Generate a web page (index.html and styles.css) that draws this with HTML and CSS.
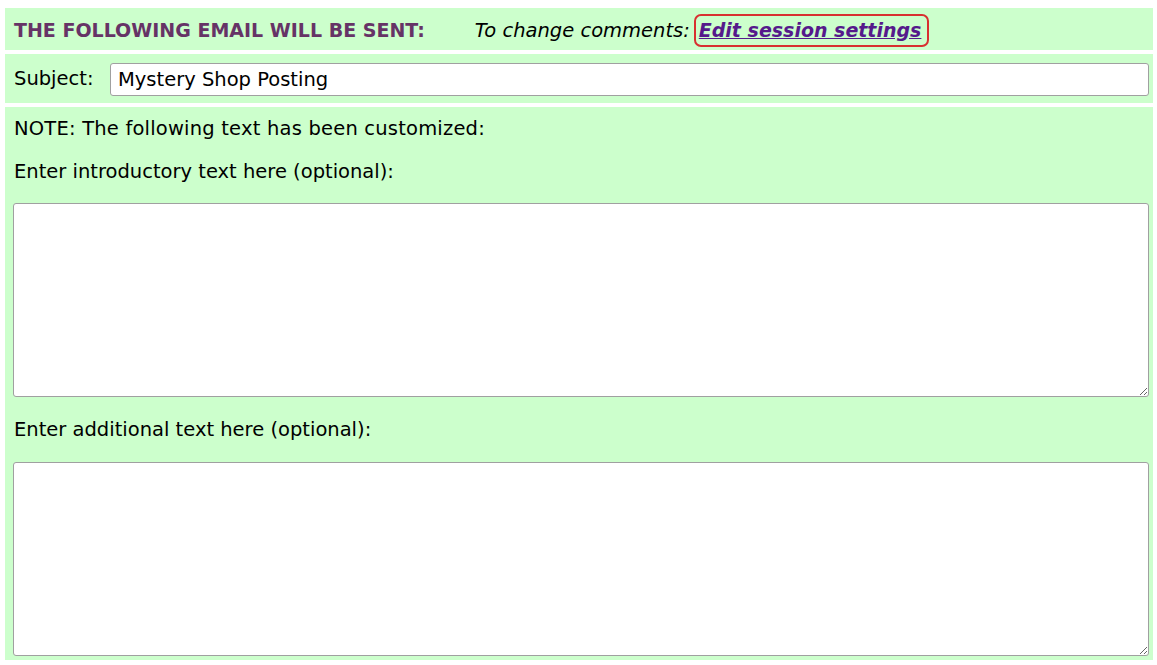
FILE: index.html
```html
<!DOCTYPE html>
<html>
<head>
<meta charset="utf-8">
<link rel="stylesheet" href="styles.css">
</head>
<body>
<div class="panel">
  <div class="row head-row">
    <span class="heading">THE FOLLOWING EMAIL WILL BE SENT:</span>
    <span class="change">To change comments:<a href="#" class="edit-link">Edit session settings</a></span>
  </div>
  <div class="row subject-row">
    <label class="subject-label" for="subj">Subject:</label>
    <input id="subj" class="subject-input" type="text" value="Mystery Shop Posting">
  </div>
  <div class="row body-row">
    <p class="note">NOTE: The following text has been customized:</p>
    <p class="prompt">Enter introductory text here (optional):</p>
    <textarea class="box"></textarea>
    <p class="prompt prompt-2">Enter additional text here (optional):</p>
    <textarea class="box"></textarea>
  </div>
</div>
</body>
</html>
```
FILE: styles.css
```css
html, body {
  margin: 0;
  padding: 0;
  background: #ffffff;
}
body {
  font-family: "DejaVu Sans", Verdana, sans-serif;
  font-size: 19.5px;
  color: #000;
}
.panel {
  margin: 8px 4px 0 5px;
  display: flex;
  flex-direction: column;
  gap: 4px;
}
.row {
  background: #ccffcc;
}
.head-row {
  height: 42px;
  box-sizing: border-box;
  display: flex;
  align-items: center;
  padding: 2px 9px 0 9px;
}
.heading {
  font-weight: bold;
  color: #663366;
  font-size: 19px;
}
.change {
  margin-left: 50px;
  font-style: italic;
  font-size: 19.5px;
}
.edit-link {
  display: inline-block;
  margin-left: 4px;
  color: #551a8b;
  font-weight: bold;
  font-style: italic;
  font-size: 19px;
  text-decoration: underline;
  border: 2px solid #d83030;
  border-radius: 7px;
  padding: 1px 6px 1px 3px;
  line-height: 27px;
}
.subject-row {
  height: 49px;
  display: flex;
  align-items: center;
  padding: 0 4px 0 9px;
}
.subject-label {
  width: 96px;
  flex: none;
}
.subject-input {
  flex: 1;
  height: 33px;
  box-sizing: border-box;
  font-family: "DejaVu Sans", Verdana, sans-serif;
  font-size: 19.5px;
  padding: 0 7px;
  margin-top: 1px;
  border: 1px solid #a0a0a0;
  border-radius: 3px;
  background: #fff;
  color: #000;
}
.body-row {
  padding: 10px 4px 4px 8px;
  display: flex;
  flex-direction: column;
}
.note, .prompt {
  margin: 0 0 0 1px;
  line-height: 23px;
}
.note {
  letter-spacing: 0.2px;
}
.prompt {
  margin-top: 20px;
  margin-bottom: 20px;
}
.prompt-2 {
  margin-top: 21px;
  margin-bottom: 21px;
}
.box {
  display: block;
  width: 100%;
  height: 194px;
  box-sizing: border-box;
  border: 1px solid #a0a0a0;
  border-radius: 3px;
  background: #fff;
  margin: 0;
  font-family: "DejaVu Sans", Verdana, sans-serif;
}
```
